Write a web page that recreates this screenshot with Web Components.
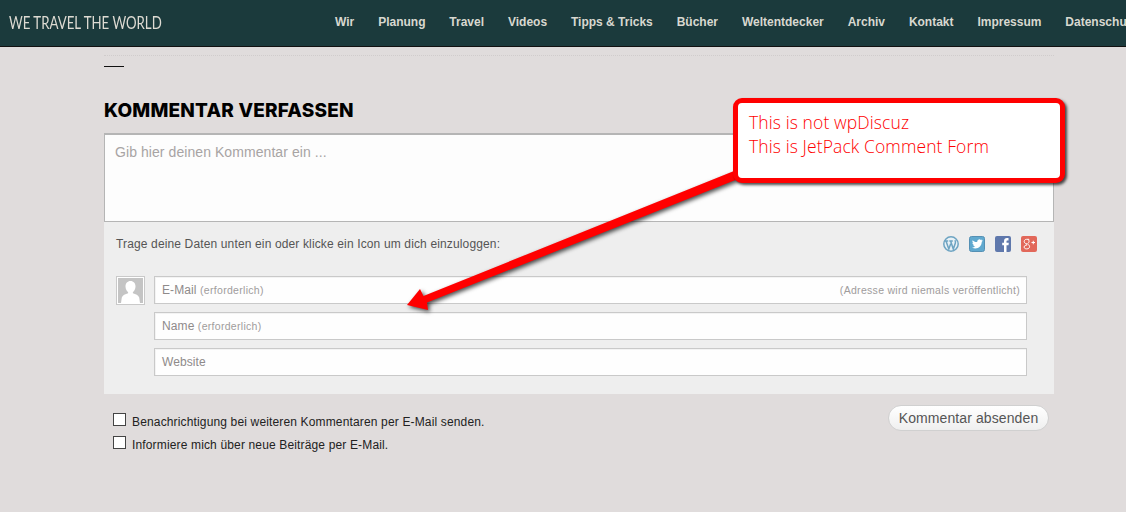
<!DOCTYPE html>
<html lang="de">
<head>
  <meta charset="UTF-8">
  <title>Kommentar verfassen</title>
  <style>
    html, body { margin: 0; height: 512px; overflow: hidden; background: #e0dcdc; }
    body { position: relative; font-family: "Liberation Sans", Arial, sans-serif; }
  </style>
</head>
<body>
  <site-header></site-header>

  <page-main>
    <comment-form>
      <form-field label="E-Mail" note="(erforderlich)" hint="(Adresse wird niemals veröffentlicht)"></form-field>
      <form-field label="Name" note="(erforderlich)"></form-field>
      <form-field label="Website"></form-field>
    </comment-form>
  </page-main>

  <note-arrow></note-arrow>
  <call-out>
    <div>This is not wpDiscuz</div>
    <div>This is JetPack Comment Form</div>
  </call-out>

  <script>
    // kleine Hilfe: shadow root mit markup anlegen
    function shadow(el, html) {
      el.attachShadow({ mode: 'open' }).innerHTML = html;
    }

    class SiteHeader extends HTMLElement {
      connectedCallback() {
        // der letzte Eintrag endet im Original genau am Fensterrand
        const items = ['Wir', 'Planung', 'Travel', 'Videos', 'Tipps & Tricks', 'Bücher', 'Weltentdecker', 'Archiv', 'Kontakt', 'Impressum', 'Datenschu'];
        shadow(this, `
          <style>
            :host { display: flex; height: 46px; background: #1b3a3c; border-bottom: 1px solid #111; align-items: center; overflow: hidden; white-space: nowrap; }
            .logo { flex: none; width: 326px; padding-left: 9px; position: relative; top: -1px; }
            .logo span { display: inline-block; font: 400 18px "Lato", sans-serif; color: #dedbd3; transform: scaleX(.735); transform-origin: left center; }
            nav { display: flex; gap: 23.900px; flex: none; position: relative; top: -1px; }
            a { font: bold 12px "Liberation Sans", Arial, sans-serif; color: #d8d8d0; text-decoration: none; }
          </style>
          <div class="logo"><span>WE TRAVEL THE WORLD</span></div>
          <nav>${items.map(i => `<a href="#">${i.replace('&', '&amp;')}</a>`).join('')}</nav>
        `);
      }
    }

    class PageMain extends HTMLElement {
      connectedCallback() {
        shadow(this, `
          <style>
            :host { display: block; width: 950px; margin-left: 104px; }
            .dots { height: 0; margin-top: 8px; border-top: 1px dotted #d0cccc; }
            .dash { width: 20px; height: 1px; background: #111; margin-top: 10px; }
            h2 { margin: 32px 0 0; font: 800 19px/24px "Inter", sans-serif; letter-spacing: .2px; color: #000; height: 23px; }
          </style>
          <div class="dots"></div>
          <div class="dash"></div>
          <h2>KOMMENTAR VERFASSEN</h2>
          <slot></slot>
        `);
      }
    }

    class CommentForm extends HTMLElement {
      connectedCallback() {
        shadow(this, `
          <style>
            :host { display: block; margin-top: 11px; }
            .text { box-sizing: border-box; height: 89px; background: #fdfdfd; border: 1px solid #b5b5b5; border-top-width: 2px; padding: 8px 10px; font-size: 14px; line-height: 18px; letter-spacing: .07px; color: #a8a4a4; }
            .panel { background: #eee; height: 172px; box-sizing: border-box; padding: 14px 27px 0 12px; }
            .top { display: flex; justify-content: space-between; align-items: center; height: 16px; font-size: 12px; color: #555; letter-spacing: .14px; }
            social-icons { margin-right: -10px; }
            .row { display: flex; gap: 9px; margin-top: 24px; }
            .fields { flex: 1; display: flex; flex-direction: column; gap: 8px; }
            .foot { display: flex; justify-content: space-between; padding: 11px 5px 0 9px; }
            .checks { display: flex; flex-direction: column; gap: 9px; padding-top: 8px; }
            label { display: flex; gap: 6px; font-size: 12px; line-height: 14px; color: #222; letter-spacing: .15px; }
            label span:last-child { position: relative; top: 2px; }
            .box { box-sizing: border-box; width: 13px; height: 13px; background: #fff; border: 1px solid #444; }
            button { box-sizing: border-box; width: 161px; height: 26px; padding: 0; border: 1px solid #d0d0d0; border-radius: 13px; background: linear-gradient(#fff, #efefef); font: 14px "Liberation Sans", Arial, sans-serif; letter-spacing: .1px; color: #555; }
          </style>
          <div class="text">Gib hier deinen Kommentar ein ...</div>
          <div class="panel">
            <div class="top">
              <span>Trage deine Daten unten ein oder klicke ein Icon um dich einzuloggen:</span>
              <social-icons></social-icons>
            </div>
            <div class="row">
              <user-avatar></user-avatar>
              <div class="fields"><slot></slot></div>
            </div>
          </div>
          <div class="foot">
            <div class="checks">
              <label><span class="box"></span><span>Benachrichtigung bei weiteren Kommentaren per E-Mail senden.</span></label>
              <label><span class="box"></span><span>Informiere mich über neue Beiträge per E-Mail.</span></label>
            </div>
            <button>Kommentar absenden</button>
          </div>
        `);
      }
    }

    class FormField extends HTMLElement {
      connectedCallback() {
        const note = this.getAttribute('note');
        const hint = this.getAttribute('hint');
        shadow(this, `
          <style>
            :host { display: flex; box-sizing: border-box; height: 28px; justify-content: space-between; align-items: center; padding: 0 6px 0 7px; background: #fefefe; border: 1px solid #c9c9c9; box-shadow: inset 1px 1px 0 #f3f3f3; font-size: 12px; letter-spacing: .1px; color: #8e8a8a; }
            small { font-size: 10.500px; color: #a09c9c; letter-spacing: .3px; }
          </style>
          <span>${this.getAttribute('label')}${note ? ` <small>${note}</small>` : ''}</span>
          ${hint ? `<small>${hint}</small>` : ''}
        `);
      }
    }

    class UserAvatar extends HTMLElement {
      connectedCallback() {
        shadow(this, `
          <style>
            :host { display: block; box-sizing: border-box; width: 29px; height: 29px; border: 1px solid #c9c9c9; background: #fff; padding: 1px; flex: none; }
            svg { display: block; }
          </style>
          <svg width="25" height="25" viewBox="0 0 25 25">
            <rect width="25" height="25" fill="#c4c4c4"/>
            <path d="M12.500 3c3 0 5 2.300 5 5.400 0 2.500-1.200 4.600-2.600 5.600v1.300c2.800.8 5.500 2 6.300 4.200L22 25H3l.8-5.500c.8-2.200 3.500-3.400 6.300-4.200V14c-1.400-1-2.600-3.100-2.600-5.600C7.500 5.300 9.500 3 12.500 3z" fill="#fff"/>
          </svg>
        `);
      }
    }

    class SocialIcons extends HTMLElement {
      connectedCallback() {
        shadow(this, `
          <style>
            :host { display: flex; gap: 10px; }
            svg { display: block; }
          </style>
          <svg width="16" height="16" viewBox="0 0 16 16">
            <circle cx="8" cy="8" r="7.200" fill="#e8f1f6" stroke="#6ea4c2" stroke-width="1.500"/>
            <path d="M1.800 5h3.400M3 5.100l2.800 8 1.900-5.400M6.300 5h3.500M7.600 5.100l2.700 8 2-5.800c.5-1.300.2-2.200-.5-3" fill="none" stroke="#6ea4c2" stroke-width="1.500"/>
          </svg>
          <svg width="16" height="16" viewBox="0 0 16 16">
            <rect x=".5" y=".5" width="15" height="15" rx="2" fill="#61a9cf" stroke="#5590b4"/>
            <path d="M13.500 4.300c-.4.200-.8.300-1.200.4.400-.3.800-.7.900-1.200-.4.300-.9.400-1.300.5a2.200 2.200 0 0 0-3.700 2C6.400 6.400 4.800 5.500 3.700 4.200c-.6 1-.3 2.300.7 2.900-.4 0-.7-.1-1-.3 0 1.100.8 2 1.800 2.200-.3.100-.7.100-1 0 .3.900 1.100 1.500 2.100 1.500-1 .8-2.200 1.100-3.300 1 3.800 2.300 9.500.6 9.800-5.700.4-.4.700-.8.900-1.300z" fill="#fff"/>
          </svg>
          <svg width="16" height="16" viewBox="0 0 16 16">
            <rect width="16" height="16" rx="2" fill="#5f78ac"/>
            <path d="M9 16V9.300H7.200V6.800H9V5.200C9 3.100 10.200 2 12 2h1.500v2.400h-1c-.8 0-1 .4-1 1v1.400h2.300l-.3 2.500h-2V16z" fill="#fff"/>
          </svg>
          <svg width="16" height="16" viewBox="0 0 16 16">
            <rect width="16" height="16" rx="2" fill="#e2685a"/>
            <path d="M7.900 3.300H5.600C4.200 3.300 3.200 4.300 3.200 5.500c0 1.200 1 2.100 2.100 2.100h.5c-.3.600 0 1 .3 1.400-1.300 0-3 .6-3 2.100 0 1.200 1.300 1.800 2.600 1.800 1.800 0 2.900-1.100 2.900-2.200 0-1.800-2-2.200-1.900-3 .1-.6 1.400-1 1.400-2.300 0-.7-.3-1.200-.7-1.600h.5z" fill="none" stroke="#fff" stroke-width="1"/>
            <path d="M10.500 6.500h3.500M12.250 4.750v3.500" stroke="#fff" stroke-width="1"/>
          </svg>
        `);
      }
    }

    // liegt frei über dem Formular
    class NoteArrow extends HTMLElement {
      connectedCallback() {
        shadow(this, `
          <style>
            :host { position: absolute; left: 0; top: 0; width: 1126px; height: 512px; pointer-events: none; }
            svg { display: block; filter: drop-shadow(2px 2px 2px rgba(0,0,0,.7)); }
          </style>
          <svg width="1126" height="512">
            <path d="M407 305 L420 289 L423.500 296 L734 171 L738 179 L427 302.500 L428 310 Z" fill="#f00"/>
          </svg>
        `);
      }
    }

    class CallOut extends HTMLElement {
      connectedCallback() {
        shadow(this, `
          <style>
            :host { position: absolute; left: 733px; top: 98px; width: 332px; height: 85px; box-sizing: border-box; background: #fff; border: 5px solid #f00; border-radius: 9px; box-shadow: 2px 2px 3px rgba(0,0,0,.7); padding: 7px 0 0 11px; font: 300 17.500px/24px "Open Sans", sans-serif; letter-spacing: .1px; color: #f00; }
          </style>
          <slot></slot>
        `);
      }
    }

    customElements.define('site-header', SiteHeader);
    customElements.define('page-main', PageMain);
    customElements.define('comment-form', CommentForm);
    customElements.define('form-field', FormField);
    customElements.define('user-avatar', UserAvatar);
    customElements.define('social-icons', SocialIcons);
    customElements.define('note-arrow', NoteArrow);
    customElements.define('call-out', CallOut);
  </script>
</body>
</html>
